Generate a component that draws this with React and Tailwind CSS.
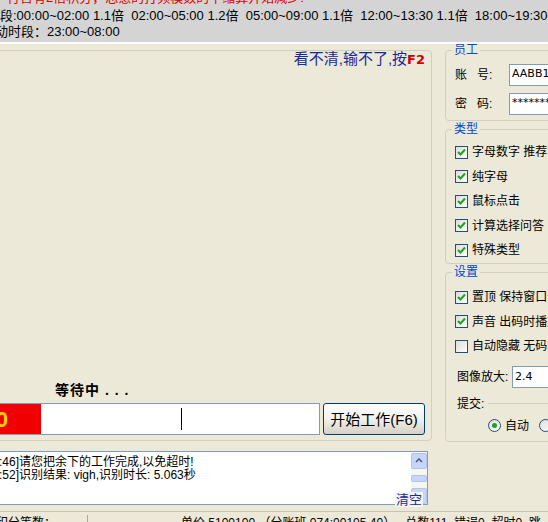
import React from 'react';

const Check = ({ checked }) => (
  <span className="w-[13px] h-[13px] shrink-0 border border-[#1c5180] bg-gradient-to-br from-[#dcdcd7] to-white flex items-center justify-center">
    {checked && (
      <svg width="9" height="9" viewBox="0 0 9 9">
        <path d="M1 4 L3.5 6.5 L8 1.5" fill="none" stroke="#21a121" strokeWidth="2" />
      </svg>
    )}
  </span>
);

const CheckRow = ({ checked, label }) => (
  <div className="flex items-center gap-[4px] h-[24.5px] whitespace-nowrap">
    <Check checked={checked} />
    <span>{label}</span>
  </div>
);

const Group = ({ title, className, children }) => (
  <fieldset className={`border border-[#d0d0bf] rounded-[4px] pl-[9px] ${className}`}>
    <legend className="ml-[-3px] px-[2px] text-[#0046d5] leading-[14px]">{title}</legend>
    {children}
  </fieldset>
);

const Field = ({ label, value }) => (
  <div className="flex items-center h-[29px] whitespace-nowrap">
    <span className="w-[54px] whitespace-pre">{label}</span>
    <div className="h-[22px] w-[80px] border border-[#7f9db9] bg-white flex items-center px-[2px] text-[11px] font-['DejaVu_Sans',sans-serif]">
      {value}
    </div>
  </div>
);

export default function App() {
  return (
    <div className="w-[548px] h-[522px] overflow-hidden bg-[#ece9d8] text-[12px] text-black font-['Liberation_Sans','Noto_Sans_CJK_SC',sans-serif] flex flex-col">
      {/* header notice */}
      <div className="h-[44px] shrink-0 bg-[#d4d4d4] border-b-2 border-b-white whitespace-nowrap text-[13px] leading-[16px] overflow-hidden">
        <div className="mt-[-10px] ml-[-6px] text-[#e00000]">户行含有2倍积分，总意的打频模数的中缩算开始减少!</div>
        <div className="mt-[2px]">段:00:00~02:00 1.1倍&nbsp;&nbsp;02:00~05:00 1.2倍&nbsp;&nbsp;05:00~09:00 1.1倍&nbsp;&nbsp;12:00~13:30 1.1倍&nbsp;&nbsp;18:00~19:30 1.1倍</div>
        <div className="ml-[-5px]">动时段：23:00~08:00</div>
      </div>

      <div className="flex flex-1 min-h-0">
        {/* left work area */}
        <div className="w-[442px] ml-[-10px] shrink-0 flex flex-col">
          <div className="mt-[6px] h-[391px] border border-[#d0d0bf] rounded-[4px] flex flex-col">
            <div className="text-right pr-[6px] text-[15px] leading-[16px] text-[#1a2a9a]">
              看不清,输不了,按<span className="text-[#d00000] font-bold font-['DejaVu_Sans',sans-serif] text-[13px]">F2</span>
            </div>
            <div className="flex-1" />
            <div className="pl-[64px] text-[14px] leading-[16px] font-bold tracking-[1px]">等待中 . . .</div>
            <div className="mt-[5px] mb-[5px] h-[32px] flex items-stretch">
              <div className="w-[329px] flex border border-[#7f9db9]">
                <div className="w-[49px] bg-[#f00000] flex items-center justify-end pr-[33px] text-[#ffd800] text-[22px] font-bold overflow-hidden">0</div>
                <div className="flex-1 bg-white flex items-center pl-[140px]">
                  <span className="w-[1px] h-[22px] bg-black" />
                </div>
              </div>
              <button className="ml-[3px] w-[102px] border border-[#003c74] rounded-[3px] bg-gradient-to-b from-white via-[#f2f1ec] to-[#d6d0c5] text-[15px] leading-none">
                开始工作(F6)
              </button>
            </div>
          </div>

          {/* log */}
          <div className="relative mt-[10px] h-[54px] w-[438px] border border-[#7f9db9] bg-white flex">
            <div className="flex-1 pl-[8px] pt-[4px] leading-[13px] whitespace-nowrap">
              <div>:46]请您把余下的工作完成,以免超时!</div>
              <div>:52]识别结果: vigh,识别时长: 5.063秒</div>
            </div>
            <div className="w-[16px] bg-[#f6f5ef] flex flex-col gap-[6px] pt-[1px]">
              <div className="h-[16px] rounded-[2px] bg-[#c6d6fb] border border-[#b0c4f0] flex items-center justify-center">
                <svg width="8" height="5" viewBox="0 0 8 5"><path d="M1 4 L4 1 L7 4" fill="none" stroke="#4d6185" strokeWidth="1.6" /></svg>
              </div>
              <div className="h-[8px] rounded-[2px] bg-[#c6d6fb] border border-[#b0c4f0]" />
              <div className="h-[16px] rounded-[2px] bg-[#c6d6fb] border border-[#b0c4f0]" />
            </div>
            <span className="absolute right-[4px] bottom-[-3px] bg-[#f6f5ef] px-[1px] text-[13px] leading-[15px] text-[#1a2a9a]">清空</span>
          </div>
        </div>

        {/* right settings */}
        <div className="ml-[13px] w-[130px] shrink-0 flex flex-col">
          <Group title="员工" className="mt-[-1px] h-[78px]">
            <div className="pt-[3px]">
              <Field label={'账   号:'} value="AABB10" />
              <Field label={'密   码:'} value="********" />
            </div>
          </Group>
          <Group title="类型" className="mt-[1px] h-[142px]">
            <div className="pt-[4px]">
              <CheckRow checked label="字母数字 推荐" />
              <CheckRow checked label="纯字母" />
              <CheckRow checked label="鼠标点击" />
              <CheckRow checked label="计算选择问答" />
              <CheckRow checked label="特殊类型" />
            </div>
          </Group>
          <Group title="设置" className="mt-[1px] h-[177px]">
            <div className="pt-[6px]">
              <CheckRow checked label="置顶 保持窗口最前" />
              <CheckRow checked label="声音 出码时播放" />
              <CheckRow label="自动隐藏 无码时" />
              <div className="flex items-center h-[35px] pt-[2px] whitespace-nowrap">
                <span className="pl-[2px] w-[57px]">图像放大:</span>
                <div className="h-[22px] w-[60px] border border-[#7f9db9] bg-white flex items-center px-[2px] text-[11px] font-['DejaVu_Sans',sans-serif]">2.4</div>
              </div>
              <div className="flex items-center h-[20px] whitespace-nowrap">
                <span className="pl-[2px]">提交:</span>
                <span className="ml-[4px] flex-1 h-px bg-[#d0d0bf]" />
              </div>
              <div className="flex items-center h-[24px] pl-[33px] gap-[4px] whitespace-nowrap">
                <span className="w-[13px] h-[13px] rounded-full border border-[#1c5180] bg-gradient-to-br from-[#dcdcd7] to-white flex items-center justify-center">
                  <span className="w-[5px] h-[5px] rounded-full bg-[#21a121]" />
                </span>
                <span>自动</span>
                <span className="ml-[6px] w-[13px] h-[13px] rounded-full border border-[#1c5180] bg-gradient-to-br from-[#dcdcd7] to-white" />
                <span>手动</span>
              </div>
            </div>
          </Group>
        </div>
      </div>

      {/* status bar */}
      <div className="h-[11px] shrink-0 border-t border-t-[#c5c2b2] flex whitespace-nowrap leading-[16px] pt-[3px] overflow-hidden">
        <div className="w-[92px] border-r border-r-[#aca899] ml-[-4px]">积分等数：</div>
        <div className="pl-[93px] whitespace-pre">单价 5100100 （分账班 074:00105 40）   总数111  错误0  超时0  跳</div>
      </div>
    </div>
  );
}
